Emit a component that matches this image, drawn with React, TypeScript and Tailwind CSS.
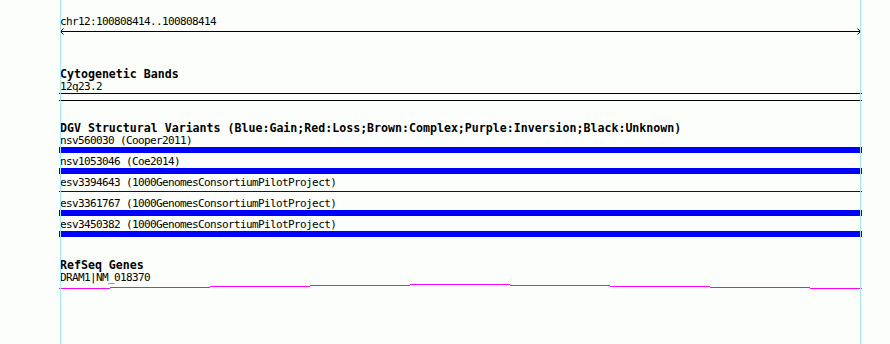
import React from 'react';

interface Variant {
  id: string;
  study: string;
  thin?: boolean;
}

const variants: Variant[] = [
  { id: 'nsv560030', study: 'Cooper2011' },
  { id: 'nsv1053046', study: 'Coe2014' },
  { id: 'esv3394643', study: '1000GenomesConsortiumPilotProject', thin: true },
  { id: 'esv3361767', study: '1000GenomesConsortiumPilotProject' },
  { id: 'esv3450382', study: '1000GenomesConsortiumPilotProject' },
];

// gene line drawn in 100px steps, y offsets inside the 5px svg
const geneSteps = [
  { x: 0, w: 51, y: 4 },
  { x: 51, w: 100, y: 3 },
  { x: 151, w: 100, y: 2 },
  { x: 251, w: 100, y: 1 },
  { x: 351, w: 100, y: 0 },
  { x: 451, w: 100, y: 1 },
  { x: 551, w: 100, y: 2 },
  { x: 651, w: 100, y: 3 },
  { x: 751, w: 52, y: 4 },
];

const mono = "font-['DejaVu_Sans_Mono','Liberation_Mono',monospace]";

const TrackTitle = ({ children }: { children: React.ReactNode }) => (
  <div className={`${mono} text-[11.6px] leading-[13px] font-bold text-black pl-[1px] whitespace-nowrap`}>
    {children}
  </div>
);

// 11px glyphs squeezed to a 6px advance
const Label = ({ children }: { children: React.ReactNode }) => (
  <div className={`${mono} text-[11px] leading-[12px] tracking-[-0.62px] text-black pl-[1px] whitespace-nowrap`}>
    {children}
  </div>
);

export default function App() {
  return (
    <div className="relative w-[890px] h-[344px] bg-[#fbfefb] overflow-hidden">
      {/* guide lines */}
      <div className="absolute left-[60px] top-0 h-full w-px bg-[#a6e8f0]" />
      <div className="absolute left-[860px] top-0 h-full w-px bg-[#a6e8f0]" />

      <div className="ml-[59px] w-[803px] pt-[16px]">
        {/* ruler */}
        <Label>chr12:100808414..100808414</Label>
        <svg width="803" height="7" className="block">
          <line x1="1" y1="3.5" x2="802" y2="3.5" stroke="#000" strokeWidth="1" />
          <polyline points="4.5,0.5 1.5,3.5 4.5,6.5" fill="none" stroke="#000" strokeWidth="1" />
          <polyline points="798.5,0.5 801.5,3.5 798.5,6.5" fill="none" stroke="#000" strokeWidth="1" />
        </svg>

        {/* cytogenetic bands */}
        <div className="mt-[33px]">
          <TrackTitle>Cytogenetic Bands</TrackTitle>
          <Label>12q23.2</Label>
          <div className="h-[8px] border-t border-b border-black" />
        </div>

        {/* DGV */}
        <div className="mt-[21px]">
          <TrackTitle>DGV Structural Variants (Blue:Gain;Red:Loss;Brown:Complex;Purple:Inversion;Black:Unknown)</TrackTitle>
          <div className="flex flex-col gap-[3px]">
            {variants.map((v) => (
              <div key={v.id}>
                <Label>
                  {v.id} ({v.study})
                </Label>
                {v.thin ? (
                  <div className="h-[6px] pt-[2px]">
                    <div className="h-px bg-[#0000cc]" />
                  </div>
                ) : (
                  <div className="h-[6px] bg-[#0000ff]" />
                )}
              </div>
            ))}
          </div>
        </div>

        {/* RefSeq */}
        <div className="mt-[22px]">
          <TrackTitle>RefSeq Genes</TrackTitle>
          <Label>DRAM1|NM_018370</Label>
          <svg width="803" height="5" className="block">
            {geneSteps.map((s) => (
              <rect key={s.x} x={s.x} y={s.y} width={s.w} height="1" fill="#ff00ff" />
            ))}
          </svg>
        </div>
      </div>
    </div>
  );
}
